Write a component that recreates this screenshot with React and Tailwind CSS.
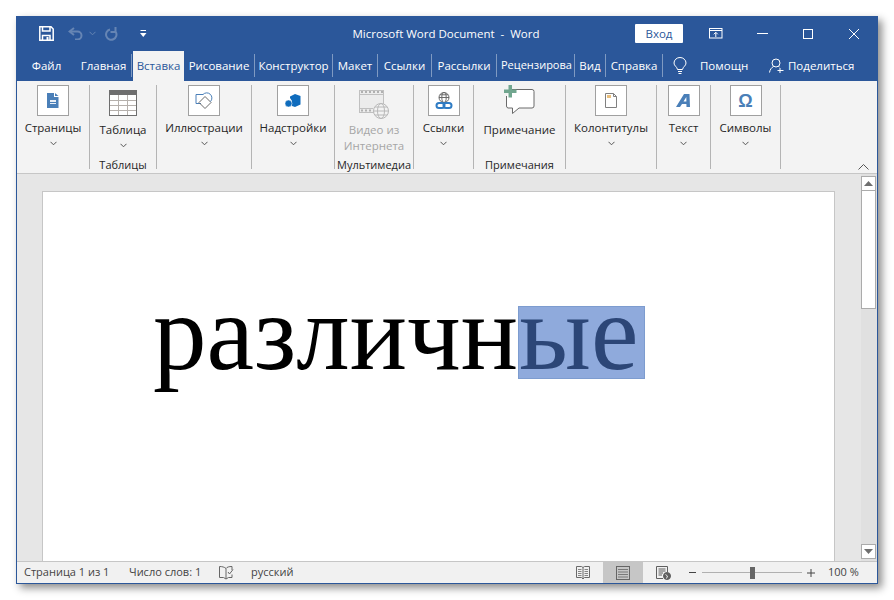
import React from 'react';

const Chevron = ({ className = 'text-[#555]' }) => (
    <svg width="7" height="5" viewBox="0 0 7 5" fill="none" stroke="currentColor" className={className}>
        <path d="M.5 .8 3.5 3.8 6.5 .8" />
    </svg>
);

const IconBox = ({ children }) => (
    <div className="w-[32px] h-[31px] bg-white border border-[#a0a0a0] flex items-center justify-center">{children}</div>
);

const PagesIcon = () => (
    <svg width="12" height="15" viewBox="0 0 12 15">
        <path d="M0 0H7V4H11.5V15H0Z" fill="#4a7fb8" />
        <path d="M8 0 11.5 3H8Z" fill="#4a7fb8" />
        <path d="M3 7H9V9H3ZM3 10H9V11H3Z" fill="#e8eef6" />
    </svg>
);

const TableIcon = () => (
    <svg width="28" height="26" viewBox="0 0 28 26">
        <rect x=".5" y=".5" width="27" height="25" fill="#fff" stroke="#6e6e6e" />
        <rect width="28" height="5" fill="#6e6e6e" />
        <path d="M9.5 5V25M18.5 5V25M1 10.5H27M1 15.5H27M1 20.5H27" stroke="#b5b0ac" fill="none" />
    </svg>
);

const ShapesIcon = () => (
    <svg width="18" height="18" viewBox="0 0 18 18" fill="none">
        <path d="M6 11.500H1V2.500H8" stroke="#4a7fb8" />
        <path d="M10 4.500 16 10.500 10 16.500 4 10.500Z" stroke="#6a6a6a" />
        <path d="M8 2.500A5 5 0 0 1 15.500 9.500" stroke="#4a7fb8" />
    </svg>
);

const AddinIcon = () => (
    <svg width="16" height="15" viewBox="0 0 16 15">
        <path d="M5 3.500 10 1 15.500 3V11.500L10 14 7 13V8L5 5Z" fill="#0f6cbd" />
        <circle cx="3.500" cy="10.500" r="3.500" fill="#0f6cbd" stroke="#fff" strokeWidth=".5" />
    </svg>
);

const VideoIcon = () => (
    <svg width="30" height="30" viewBox="0 0 30 30" fill="none">
        <rect x=".5" y=".5" width="24" height="22" fill="#ececec" stroke="#c0c0c0" />
        <path d="M.5 4.500H24.500M.5 18.500H14" stroke="#c0c0c0" />
        <path d="M2 2H4M6 2H8M10 2H12M14 2H16M18 2H20M22 2H24M2 20.500H4M6 20.500H8M10 20.500H12" stroke="#b0b0b0" strokeWidth="2" />
        <circle cx="22" cy="21" r="7.500" fill="#f3f3f3" stroke="#b8b8b8" />
        <ellipse cx="22" cy="21" rx="3.500" ry="7.500" stroke="#b8b8b8" />
        <path d="M14.500 21H29.500M16 17H28M16 25H28" stroke="#b8b8b8" />
    </svg>
);

const LinkIcon = () => (
    <svg width="18" height="18" viewBox="0 0 18 18" fill="none">
        <circle cx="9" cy="5.500" r="5" stroke="#6a6a6a" />
        <ellipse cx="9" cy="5.500" rx="2.200" ry="5" stroke="#6a6a6a" />
        <path d="M4 5.500H14M5 2.800H13" stroke="#6a6a6a" />
        <rect x="1.500" y="11" width="8" height="5" rx="2.500" fill="#fff" stroke="#2f7cc4" strokeWidth="2" />
        <rect x="8.500" y="11" width="8" height="5" rx="2.500" stroke="#2f7cc4" strokeWidth="2" />
    </svg>
);

const CommentIcon = () => (
    <svg width="31" height="30" viewBox="0 0 31 30" fill="none">
        <path d="M7.500 4.500H28A2 2 0 0 1 30 6.500V21A2 2 0 0 1 28 23H15L8.500 28.500V23H4A2 2 0 0 1 2.500 21V11" fill="#fff" stroke="#6a6a6a" />
        <path d="M4.500 0H8V4.500H12.500V8H8V12.500H4.500V8H0V4.500H4.500Z" fill="#71a68f" />
    </svg>
);

const HeaderIcon = () => (
    <svg width="12" height="15" viewBox="0 0 12 15" fill="none">
        <path d="M.5 .5H8.500L11.500 3.500V14.500H.5Z" fill="#fff" stroke="#808080" />
        <rect x="2" y="2" width="4" height="3" fill="#e9bf7c" />
        <path d="M8.500 .5V3.500H11.500" stroke="#808080" />
    </svg>
);

const TextIcon = () => (
    <svg width="15" height="13" viewBox="0 0 15 13" fill="#4a7fb8">
        <path d="M8 0H13.500L14 13H10.500L10.400 10H6L4 13H0ZM10.300 3 7.500 7.500H10.400Z" fillRule="evenodd" />
    </svg>
);

const SaveIcon = () => (
    <svg width="15" height="15" viewBox="0 0 15 15" fill="none" stroke="#fff" strokeWidth="1.500">
        <path d="M.8 .8H12L14.200 3V14.200H.8Z" />
        <path d="M3.500 1V5H11V1M3.500 14V9.500H11V14" />
        <path d="M7.500 11H9.500V14H7.500Z" fill="#fff" stroke="none" />
    </svg>
);

const UndoIcon = () => (
    <svg width="15" height="13" viewBox="0 0 15 13" fill="none" stroke="#6685b4" strokeWidth="2">
        <path d="M6 1 1.500 4.500 6 8" />
        <path d="M2 4.500H9.500A4 4 0 0 1 9.500 12.500H7" />
    </svg>
);

const RedoIcon = () => (
    <svg width="14" height="14" viewBox="0 0 14 14" fill="none" stroke="#6685b4" strokeWidth="2">
        <path d="M6 2.500A5.200 5.200 0 1 0 11.800 5" />
        <path d="M11.500 0V5H6.500" />
    </svg>
);

const QatIcon = () => (
    <svg width="7" height="8" viewBox="0 0 7 8" fill="#fff">
        <path d="M.5 0H6V1H.5ZM0 3H6.500L3.250 7Z" />
    </svg>
);

const DisplayIcon = () => (
    <svg width="14" height="11" viewBox="0 0 14 11" fill="none" stroke="#fff">
        <rect x=".5" y=".5" width="12.500" height="9.500" />
        <path d="M.5 2.500H13M6.800 9V4.500M4.800 6.300 6.800 4.300 8.800 6.300" />
    </svg>
);

const BulbIcon = () => (
    <svg width="14" height="18" viewBox="0 0 14 18" fill="none" stroke="#fff">
        <path d="M4.500 12.500C4 9.500 1 9 1 6A6 5.500 0 0 1 13 6C13 9 10 9.500 9.500 12.500Z" />
        <path d="M5 14.500H9M5.500 16.500H8.500" />
    </svg>
);

const PersonIcon = () => (
    <svg width="15" height="15" viewBox="0 0 15 15" fill="none" stroke="#fff">
        <circle cx="7" cy="5" r="4" />
        <path d="M.5 14.500C1 11.500 2.500 9.500 4.500 8.500M9.500 8.500 10.500 9" />
        <path d="M11 10V15M8.500 12.500H14.500" />
    </svg>
);

const ProofIcon = () => (
    <svg width="15" height="14" viewBox="0 0 15 14" fill="none" stroke="#666">
        <path d="M7 2.500C5.500 1 3 .5 .5 .5V11.500H4.500L7 13V2.500ZM7 2.500C8 1 10 .5 13 .5V4M7 13 9.500 11.500H13V8.500" />
        <path d="M9 6 10.500 8 14 3.500" />
    </svg>
);

const ReadIcon = () => (
    <svg width="14" height="14" viewBox="0 0 14 14" fill="none" stroke="#6a6a6a">
        <path d="M.5 .5H5.500L7 1.500 8.500 .5H13.500V11.500H8.500L7 13 5.500 11.500H.5ZM7 1.500V13" />
        <path d="M2 3.500H5.500M2 5.500H5.500M2 7.500H5.500M2 9.500H5.500M8.500 3.500H12M8.500 5.500H12M8.500 7.500H12M8.500 9.500H12" strokeWidth=".8" />
    </svg>
);

const PrintIcon = () => (
    <svg width="14" height="14" viewBox="0 0 14 14" fill="none" stroke="#666">
        <rect x=".5" y=".5" width="13" height="13" />
        <path d="M2 3.500H12M2 6H12M2 8.500H12M2 11H12" strokeWidth=".8" />
    </svg>
);

const WebIcon = () => (
    <svg width="15" height="14" viewBox="0 0 15 14" fill="none" stroke="#5f5f5f">
        <path d="M7 12.500H.5V.5H11.500V6" />
        <path d="M2.500 3H9.500M2.500 5H9.500M2.500 7H7M2.500 9H6" />
        <circle cx="11" cy="10" r="3.500" fill="#5f5f5f" />
        <path d="M9.500 8.500 11.500 10 10.500 12.500" stroke="#e8e8e8" />
    </svg>
);

const Sep = () => <div className="w-px h-[23px] bg-[#7f9ac2] shrink-0" />;

const Tab = ({ w, children, left }) => (
    <div className={`h-full flex items-center shrink-0 ${left ? 'pl-[4px] text-[11px]' : 'justify-center'} ${w}`}>
        <span className="whitespace-nowrap">{children}</span>
    </div>
);

const Group = ({ w, icon, label, groupLabel, noChevron, low, disabled, children }) => (
    <div className={`${w} h-[84px] shrink-0 border-r border-[#b4b4b4] flex flex-col items-center`}>
        <div className="h-[32px] flex items-start justify-center">{icon}</div>
        {children || (
            <div className={`${low ? 'mt-[5px]' : 'mt-[3px]'} leading-[16px] whitespace-nowrap ${disabled ? 'text-[#a6a6a6]' : ''}`}>{label}</div>
        )}
        {!noChevron && <div className="mt-[5px] leading-none"><Chevron /></div>}
        {groupLabel && <div className="mt-auto -mb-[4px] leading-[16px] text-[11px] whitespace-nowrap">{groupLabel}</div>}
    </div>
);

export default function App() {
    return (
        <div className="w-[894px] h-[600px] bg-white pl-[16px] pt-[16px] overflow-hidden text-[#262626] font-['Open_Sans',sans-serif] text-[11.5px]">
            <div className="w-[862px] h-[568px] border border-[#2b579a] bg-[#e6e6e6] flex flex-col shadow-[4px_4px_8px_rgba(0,0,0,0.45)]">
                {/* title bar */}
                <div className="h-[33px] shrink-0 bg-[#2b579a] text-white flex items-center">
                    <div className="ml-[22px]"><SaveIcon /></div>
                    <div className="ml-[14px]"><UndoIcon /></div>
                    <div className="ml-[6px]"><Chevron className="text-[#6685b4]" /></div>
                    <div className="ml-[8px]"><RedoIcon /></div>
                    <div className="ml-[22px]"><QatIcon /></div>
                    <div className="ml-[205px] w-[188px] text-center text-[11.5px] whitespace-nowrap">Microsoft Word Document&nbsp; -&nbsp; Word</div>
                    <div className="ml-[95px] w-[48px] h-[19px] bg-white text-[#2b579a] flex items-center justify-center text-[11.5px] rounded-[1px]">Вход</div>
                    <div className="ml-[26px]"><DisplayIcon /></div>
                    <div className="ml-[34px] w-[11px] h-px bg-white" />
                    <div className="ml-[35px] w-[10px] h-[10px] border border-white" />
                    <svg className="ml-[36px]" width="10" height="10" viewBox="0 0 10 10" stroke="#fff"><path d="M0 0 10 10M10 0 0 10" /></svg>
                </div>
                {/* tabs */}
                <div className="h-[31px] shrink-0 bg-[#2b579a] text-white flex items-center text-[11.5px]">
                    <Tab w="w-[59px]">Файл</Tab>
                    <Tab w="w-[55px]">Главная</Tab>
                    <Sep />
                    <div className="ml-px mt-px w-[51px] h-[30px] bg-[#f3f3f3] text-[#2b579a] flex items-center justify-center">Вставка</div>
                    <Tab w="w-[70px]">Рисование</Tab>
                    <Sep />
                    <Tab w="w-[77px]">Конструктор</Tab>
                    <Sep />
                    <Tab w="w-[44px]">Макет</Tab>
                    <Sep />
                    <Tab w="w-[53px]">Ссылки</Tab>
                    <Sep />
                    <Tab w="w-[64px]">Рассылки</Tab>
                    <Sep />
                    <Tab w="w-[77px]" left>Рецензирова</Tab>
                    <Sep />
                    <Tab w="w-[30px]">Вид</Tab>
                    <Sep />
                    <Tab w="w-[56px]">Справка</Tab>
                    <Sep />
                    <div className="ml-[10px]"><BulbIcon /></div>
                    <div className="ml-[13px] w-[48px] whitespace-nowrap">Помощн</div>
                    <div className="ml-[21px]"><PersonIcon /></div>
                    <div className="ml-[4px] whitespace-nowrap">Поделиться</div>
                </div>
                {/* ribbon */}
                <div className="h-[93px] shrink-0 bg-[#f3f3f3] border-b border-[#c6c6c6] pt-[4px] flex items-start">
                    <Group w="w-[73px]" icon={<IconBox><PagesIcon /></IconBox>} label="Страницы" />
                    <Group w="w-[67px]" icon={<div className="pt-[5px]"><TableIcon /></div>} label="Таблица" groupLabel="Таблицы" low />
                    <Group w="w-[95px]" icon={<IconBox><ShapesIcon /></IconBox>} label="Иллюстрации" />
                    <Group w="w-[83px]" icon={<IconBox><AddinIcon /></IconBox>} label="Надстройки" />
                    <Group w="w-[79px]" icon={<div className="pt-[5px]"><VideoIcon /></div>} groupLabel="Мультимедиа" noChevron>
                        <div className="mt-[5px] leading-[16px] text-center text-[#a6a6a6]">Видео из<br />Интернета</div>
                    </Group>
                    <Group w="w-[60px]" icon={<IconBox><LinkIcon /></IconBox>} label="Ссылки" />
                    <Group w="w-[92px]" icon={<CommentIcon />} label="Примечание" groupLabel="Примечания" noChevron low />
                    <Group w="w-[91px]" icon={<IconBox><HeaderIcon /></IconBox>} label="Колонтитулы" />
                    <Group w="w-[54px]" icon={<IconBox><TextIcon /></IconBox>} label="Текст" />
                    <Group w="w-[70px]" icon={<IconBox><span className="text-[#4a7fb8] font-bold text-[18px] leading-none font-['Liberation_Sans',sans-serif]">Ω</span></IconBox>} label="Символы" />
                    <div className="ml-auto mr-[8px] self-end mb-[3px]">
                        <svg width="11" height="6" viewBox="0 0 11 6" fill="none" stroke="#555"><path d="M.5 5.500 5.500 .5 10.500 5.500" /></svg>
                    </div>
                </div>
                {/* document */}
                <div className="flex-1 min-h-0 flex">
                    <div className="w-[844px] pl-[25px] pt-[17px] bg-[#e6e6e6] min-h-0">
                        <div className="w-[793px] h-full bg-white border border-[#c6c6c6] border-b-0 pl-[110px] pt-[81px] overflow-hidden">
                            <p className="font-['Liberation_Serif',serif] text-[107px] leading-[120px] text-black whitespace-nowrap">
                                различн<span className="inline-block w-[127px] h-[73px] leading-[53px] bg-[#8faadc] border border-[#7d9ccf] text-[#2c4677]">ые</span>
                            </p>
                        </div>
                    </div>
                    {/* scrollbar */}
                    <div className="w-[15px] pt-[2px] pb-[2px] flex flex-col bg-[#e0e0e0]">
                        <div className="h-[15px] shrink-0 bg-white border border-[#ababab] flex items-center justify-center">
                            <svg width="9" height="5" viewBox="0 0 9 5" fill="#6e6e6e"><path d="M4.500 0 9 5H0Z" /></svg>
                        </div>
                        <div className="h-[118px] shrink-0 bg-white border border-[#ababab] border-t-0" />
                        <div className="mt-auto h-[15px] shrink-0 bg-white border border-[#ababab] flex items-center justify-center">
                            <svg width="9" height="5" viewBox="0 0 9 5" fill="#6e6e6e"><path d="M0 0H9L4.500 5Z" /></svg>
                        </div>
                    </div>
                    <div className="w-px bg-[#e0e0e0]" />
                </div>
                {/* status bar */}
                <div className="h-[22px] shrink-0 bg-[#f1f1f1] border-t border-[#c6c6c6] flex items-center text-[11px] text-[#444]">
                    <span className="ml-[7px] w-[84px] whitespace-nowrap">Страница 1 из 1</span>
                    <span className="ml-[21px] w-[70px] whitespace-nowrap">Число слов: 1</span>
                    <div className="ml-[20px]"><ProofIcon /></div>
                    <span className="ml-[17px] w-[42px]">русский</span>
                    <div className="ml-[283px]"><ReadIcon /></div>
                    <div className="ml-[13px] w-[40px] h-full bg-[#c6c6c6] flex items-center justify-center"><PrintIcon /></div>
                    <div className="ml-[13px]"><WebIcon /></div>
                    <div className="ml-[18px] w-[7px] h-px bg-[#444]" />
                    <div className="ml-[6px] w-[100px] h-px bg-[#b0b0b0] flex items-center pl-[48px]">
                        <div className="w-[5px] h-[12px] bg-[#666] shrink-0" />
                    </div>
                    <svg className="ml-[5px]" width="8" height="8" viewBox="0 0 8 8" stroke="#444"><path d="M0 4H8M4 0V8" /></svg>
                    <span className="ml-[13px] whitespace-nowrap">100 %</span>
                </div>
            </div>
        </div>
    );
}
